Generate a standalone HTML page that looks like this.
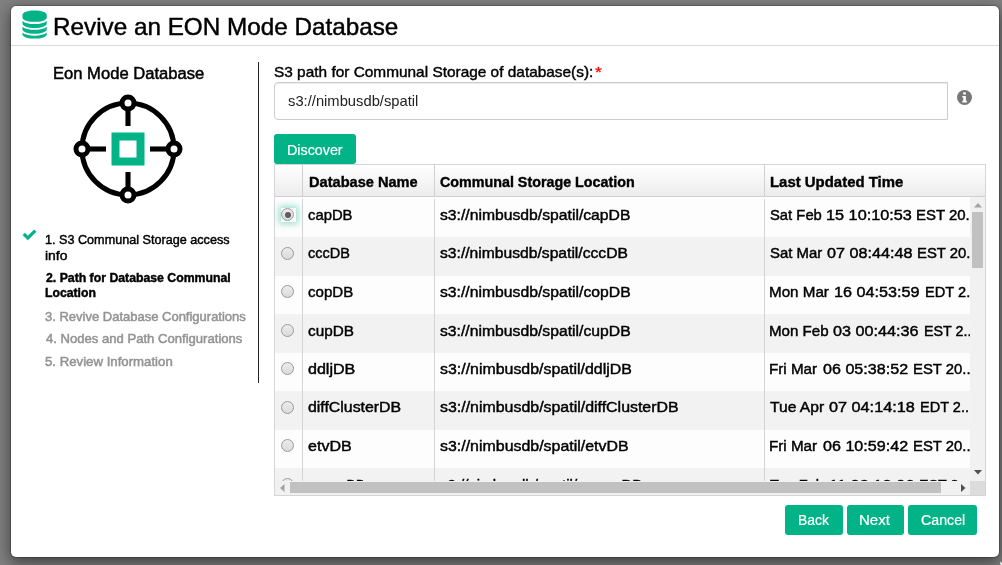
<!DOCTYPE html>
<html><head><meta charset="utf-8"><title>Revive an EON Mode Database</title>
<style>
html,body{margin:0;padding:0;}
body{width:1002px;height:565px;overflow:hidden;background:#808080;font-family:"Liberation Sans", sans-serif;position:relative;}
#bg{position:absolute;left:0;top:0;width:1002px;height:565px;background:#808080;}
#m{position:absolute;left:10px;top:5px;width:988px;height:551px;background:#fff;background-clip:padding-box;border:1px solid rgba(0,0,0,.2);border-radius:6px;box-shadow:0 5px 15px rgba(0,0,0,.5);}
#wrap{position:absolute;left:0;top:0;width:1002px;height:565px;will-change:transform;}
.mn{font-weight:inherit;}
.dots{font-style:normal;}
.t{-webkit-text-stroke:0.45px currentColor;position:absolute;white-space:nowrap;transform-origin:0 0;display:block;}
#hdr{position:absolute;left:11px;top:45px;width:988px;height:1px;background:#d9d9d9;}
#vline{position:absolute;left:258px;top:62px;width:1px;height:320.5px;background:#222;}
#inp{position:absolute;left:274px;top:82px;width:673.5px;height:38px;box-sizing:border-box;border:1px solid #ccc;border-radius:4px 0 0 4px;background:#fff;box-shadow:inset 0 1px 1px rgba(0,0,0,.075);}
.btn{position:absolute;background:#03B388;border-radius:3px;}
#tbl{position:absolute;left:274px;top:164px;width:712px;height:331.5px;box-sizing:border-box;border:1px solid #d5d5d5;background:#fff;}
#th{position:absolute;left:275px;top:165px;width:710px;height:31px;background:linear-gradient(#fff,#ececec);border-bottom:1px solid #d0d0d0;}
.hs{position:absolute;top:165px;width:1px;height:31px;background:#d0d0d0;}
#body{position:absolute;left:0;top:0;width:970px;height:480.5px;overflow:hidden;}
#bodyclip{position:absolute;left:275px;top:197px;width:695.5px;height:284.5px;overflow:hidden;}
.row{position:absolute;left:275px;width:696px;height:38.5px;}
.vs{position:absolute;top:199px;width:1px;height:283px;background:#d4d4d4;}
.radio{position:absolute;left:281px;width:13px;height:13px;box-sizing:border-box;border-radius:50%;border:1px solid #9a9a9a;background:linear-gradient(#ececec,#dadada);}
.radio i{position:absolute;left:2.5px;top:2.5px;width:6px;height:6px;border-radius:50%;background:#5c5c5c;}
.focus{position:absolute;left:281px;width:15px;height:14px;background:#fff;box-shadow:0 0 6px 2px rgba(3,179,136,.4);}
#vsb{position:absolute;left:970px;top:197px;width:15px;height:283.5px;background:#f1f1f1;}
#vth{position:absolute;left:972.2px;top:212px;width:10.6px;height:55.7px;background:#c1c1c1;}
#hsb{position:absolute;left:275px;top:480.5px;width:695px;height:14.5px;background:#f1f1f1;}
#hth{position:absolute;left:290px;top:482.2px;width:651px;height:10.6px;background:#c1c1c1;}
#corner{position:absolute;left:970px;top:480.5px;width:15px;height:14.5px;background:#dcdcdc;}
svg{position:absolute;overflow:visible;}
</style></head>
<body>
<div id="bg"></div>
<div id="m"></div>
<div id="wrap">
<div id="hdr"></div>
<!-- database icon -->
<svg style="left:21.8px;top:10.4px" width="25.2" height="29.2" viewBox="0 0 27 30" preserveAspectRatio="none">
 <g fill="#03B388">
  <path d="M0.5 5.2 C0.5 2.4 6 0.6 13.5 0.6 S26.5 2.4 26.5 5.2 V7.6 C26.5 10.4 21 12.2 13.5 12.2 S0.5 10.4 0.5 7.6 Z"/>
  <path d="M0.5 11.2 C3 13.4 8 14.4 13.5 14.4 S24 13.4 26.5 11.2 V13.8 C26.5 16.6 21 18.4 13.5 18.4 S0.5 16.6 0.5 13.8 Z"/>
  <path d="M0.5 17.2 C3 19.4 8 20.4 13.5 20.4 S24 19.4 26.5 17.2 V19.8 C26.5 22.6 21 24.4 13.5 24.4 S0.5 22.6 0.5 19.8 Z"/>
  <path d="M0.5 23.2 C3 25.4 8 26.4 13.5 26.4 S24 25.4 26.5 23.2 V24.8 C26.5 27.6 21 29.4 13.5 29.4 S0.5 27.6 0.5 24.8 Z"/>
 </g>
</svg>
<!-- eon icon -->
<svg style="left:68px;top:89px" width="120" height="120" viewBox="-60 -60 120 120">
 <g fill="none" stroke="#000" stroke-width="5.1">
  <circle cx="0" cy="0" r="46"/>
  <line x1="0" y1="-40" x2="0" y2="-23"/><line x1="0" y1="40" x2="0" y2="23"/>
  <line x1="-40" y1="0" x2="-22" y2="0"/><line x1="40" y1="0" x2="22" y2="0"/>
 </g>
 <g fill="#fff" stroke="#000" stroke-width="5">
  <circle cx="0" cy="-46" r="6"/><circle cx="0" cy="46" r="6"/><circle cx="-46" cy="0" r="6"/><circle cx="46" cy="0" r="6"/>
 </g>
 <rect x="-12.5" y="-12.5" width="25" height="25" fill="#fff" stroke="#03B388" stroke-width="8"/>
</svg>
<!-- check -->
<svg style="left:0;top:0" width="60" height="260" viewBox="0 0 60 260"><path d="M22.8 235.1 L24.8 232.9 L27.75 235.9 L34.2 229.8 L36.15 231.75 L27.75 240.1 Z" fill="#03B388" stroke="#03B388" stroke-width="0.5" stroke-linejoin="round"/></svg>
<div id="vline"></div>
<div id="inp"></div>
<!-- info icon -->
<svg style="left:957.1px;top:89.9px" width="15" height="15" viewBox="0 0 15 15"><circle cx="7.5" cy="7.5" r="7.5" fill="#777"/><rect x="6.2" y="2.3" width="2.7" height="2.2" fill="#fff"/><path d="M5.3 5.9 H8.9 V10.7 H9.9 V12.4 H5.3 V10.7 H6.3 V7.5 H5.3 Z" fill="#fff"/></svg>
<div class="btn" style="left:274.3px;top:134px;width:81.7px;height:29.7px"></div>
<div id="tbl"></div>
<div id="th"></div>
<div class="hs" style="left:302px"></div><div class="hs" style="left:434px"></div><div class="hs" style="left:764px"></div>
<div id="body">
<div class="row" style="top:198.6px;background:#fdfdfd"></div>
<div class="row" style="top:237.1px;background:#f2f2f2"></div>
<div class="row" style="top:275.6px;background:#fdfdfd"></div>
<div class="row" style="top:314.1px;background:#f2f2f2"></div>
<div class="row" style="top:352.6px;background:#fdfdfd"></div>
<div class="row" style="top:391.1px;background:#f2f2f2"></div>
<div class="row" style="top:429.6px;background:#fdfdfd"></div>
<div class="row" style="top:468.1px;background:#f2f2f2"></div>

<div class="vs" style="left:302px"></div><div class="vs" style="left:434px"></div><div class="vs" style="left:764px"></div>
<div class="focus" style="top:207.6px"></div><div class="radio" style="top:208.1px"><i></i></div>
<div class="radio" style="top:246.6px"></div>
<div class="radio" style="top:285.1px"></div>
<div class="radio" style="top:323.6px"></div>
<div class="radio" style="top:362.1px"></div>
<div class="radio" style="top:400.6px"></div>
<div class="radio" style="top:439.1px"></div>
<div class="radio" style="top:477.6px"></div>

<span class="t" id="t19" style="left:307.5px;top:205.70px;font-size:15.3px;line-height:18px;font-weight:400;color:#000;transform:scaleX(0.9687);">capDB</span>
<span class="t" id="t20" style="left:439.6px;top:205.70px;font-size:15.3px;line-height:18px;font-weight:400;color:#000;transform:scaleX(1.0274);">s3://nimbusdb/spatil/capDB</span>
<span class="t" id="t21" style="left:770.0px;top:205.70px;font-size:15.3px;line-height:18px;font-weight:400;color:#000;transform:scaleX(0.9678);">Sat Feb</span>
<span class="t" id="t22" style="left:825.5px;top:205.70px;font-size:15.3px;line-height:18px;font-weight:400;color:#000;transform:scaleX(1.0630);">15 10:10:53</span>
<span class="t" id="t23" style="left:915.7px;top:205.70px;font-size:15.3px;line-height:18px;font-weight:400;color:#000;transform:scaleX(0.9778);"><b class="mn">EST 20</b><i class="dots">...</i></span>
<span class="t" id="t24" style="left:307.8px;top:244.20px;font-size:15.3px;line-height:18px;font-weight:400;color:#000;transform:scaleX(0.9470);">cccDB</span>
<span class="t" id="t25" style="left:440.3px;top:244.20px;font-size:15.3px;line-height:18px;font-weight:400;color:#000;transform:scaleX(1.0233);">s3://nimbusdb/spatil/cccDB</span>
<span class="t" id="t26" style="left:770.0px;top:244.20px;font-size:15.3px;line-height:18px;font-weight:400;color:#000;transform:scaleX(0.9745);">Sat Mar</span>
<span class="t" id="t27" style="left:826.9px;top:244.20px;font-size:15.3px;line-height:18px;font-weight:400;color:#000;transform:scaleX(1.0564);">07 08:44:48</span>
<span class="t" id="t28" style="left:916.5px;top:244.20px;font-size:15.3px;line-height:18px;font-weight:400;color:#000;transform:scaleX(0.9717);"><b class="mn">EST 20</b><i class="dots">...</i></span>
<span class="t" id="t29" style="left:307.6px;top:282.70px;font-size:15.3px;line-height:18px;font-weight:400;color:#000;transform:scaleX(0.9860);">copDB</span>
<span class="t" id="t30" style="left:439.7px;top:282.70px;font-size:15.3px;line-height:18px;font-weight:400;color:#000;transform:scaleX(1.0285);">s3://nimbusdb/spatil/copDB</span>
<span class="t" id="t31" style="left:769.2px;top:282.70px;font-size:15.3px;line-height:18px;font-weight:400;color:#000;transform:scaleX(0.9924);">Mon Mar</span>
<span class="t" id="t32" style="left:834.3px;top:282.70px;font-size:15.3px;line-height:18px;font-weight:400;color:#000;transform:scaleX(1.0565);">16 04:53:59</span>
<span class="t" id="t33" style="left:924.6px;top:282.70px;font-size:15.3px;line-height:18px;font-weight:400;color:#000;transform:scaleX(0.9554);"><b class="mn">EDT 2</b><i class="dots">...</i></span>
<span class="t" id="t34" style="left:307.7px;top:321.70px;font-size:15.3px;line-height:18px;font-weight:400;color:#000;transform:scaleX(1.0011);">cupDB</span>
<span class="t" id="t35" style="left:439.7px;top:321.70px;font-size:15.3px;line-height:18px;font-weight:400;color:#000;transform:scaleX(1.0285);">s3://nimbusdb/spatil/cupDB</span>
<span class="t" id="t36" style="left:769.4px;top:321.70px;font-size:15.3px;line-height:18px;font-weight:400;color:#000;transform:scaleX(0.9881);">Mon Feb</span>
<span class="t" id="t37" style="left:833.3px;top:321.70px;font-size:15.3px;line-height:18px;font-weight:400;color:#000;transform:scaleX(1.0592);">03 00:44:36</span>
<span class="t" id="t38" style="left:924.0px;top:321.70px;font-size:15.3px;line-height:18px;font-weight:400;color:#000;transform:scaleX(0.9359);"><b class="mn">EST 2</b><i class="dots">...</i></span>
<span class="t" id="t39" style="left:307.5px;top:359.70px;font-size:15.3px;line-height:18px;font-weight:400;color:#000;transform:scaleX(1.0501);">ddljDB</span>
<span class="t" id="t40" style="left:439.8px;top:359.70px;font-size:15.3px;line-height:18px;font-weight:400;color:#000;transform:scaleX(1.0400);">s3://nimbusdb/spatil/ddljDB</span>
<span class="t" id="t41" style="left:768.9px;top:359.70px;font-size:15.3px;line-height:18px;font-weight:400;color:#000;transform:scaleX(0.9941);">Fri Mar</span>
<span class="t" id="t42" style="left:823.0px;top:359.70px;font-size:15.3px;line-height:18px;font-weight:400;color:#000;transform:scaleX(1.0529);">06 05:38:52</span>
<span class="t" id="t43" style="left:913.0px;top:359.70px;font-size:15.3px;line-height:18px;font-weight:400;color:#000;transform:scaleX(0.9723);"><b class="mn">EST 20</b><i class="dots">...</i></span>
<span class="t" id="t44" style="left:307.7px;top:398.20px;font-size:15.3px;line-height:18px;font-weight:400;color:#000;transform:scaleX(1.0370);">diffClusterDB</span>
<span class="t" id="t45" style="left:439.8px;top:398.20px;font-size:15.3px;line-height:18px;font-weight:400;color:#000;transform:scaleX(1.0409);">s3://nimbusdb/spatil/diffClusterDB</span>
<span class="t" id="t46" style="left:770.4px;top:398.20px;font-size:15.3px;line-height:18px;font-weight:400;color:#000;transform:scaleX(1.0210);">Tue Apr</span>
<span class="t" id="t47" style="left:829.1px;top:398.20px;font-size:15.3px;line-height:18px;font-weight:400;color:#000;transform:scaleX(1.0612);">07 04:14:18</span>
<span class="t" id="t48" style="left:919.5px;top:398.20px;font-size:15.3px;line-height:18px;font-weight:400;color:#000;transform:scaleX(0.9499);"><b class="mn">EDT 2</b><i class="dots">...</i></span>
<span class="t" id="t49" style="left:307.5px;top:436.70px;font-size:15.3px;line-height:18px;font-weight:400;color:#000;transform:scaleX(1.0507);">etvDB</span>
<span class="t" id="t50" style="left:439.8px;top:436.70px;font-size:15.3px;line-height:18px;font-weight:400;color:#000;transform:scaleX(1.0414);">s3://nimbusdb/spatil/etvDB</span>
<span class="t" id="t51" style="left:768.9px;top:436.70px;font-size:15.3px;line-height:18px;font-weight:400;color:#000;transform:scaleX(0.9941);">Fri Mar</span>
<span class="t" id="t52" style="left:823.0px;top:436.70px;font-size:15.3px;line-height:18px;font-weight:400;color:#000;transform:scaleX(1.0529);">06 10:59:42</span>
<span class="t" id="t53" style="left:913.0px;top:436.70px;font-size:15.3px;line-height:18px;font-weight:400;color:#000;transform:scaleX(0.9723);"><b class="mn">EST 20</b><i class="dots">...</i></span>
<span class="t" id="t54" style="left:307.7px;top:475.70px;font-size:15.3px;line-height:18px;font-weight:400;color:#000;transform:scaleX(0.8560);">evmaxDB</span>
<span class="t" id="t55" style="left:440.4px;top:475.70px;font-size:15.3px;line-height:18px;font-weight:400;color:#000;transform:scaleX(0.9833);">s3://nimbusdb/spatil/evmaxDB</span>
<span class="t" id="t56" style="left:770.4px;top:475.70px;font-size:15.3px;line-height:18px;font-weight:400;color:#000;transform:scaleX(0.9569);">Tue Feb</span>
<span class="t" id="t57" style="left:828.5px;top:475.70px;font-size:15.3px;line-height:18px;font-weight:400;color:#000;transform:scaleX(1.0720);">11 08:13:06</span>
<span class="t" id="t58" style="left:919.1px;top:475.70px;font-size:15.3px;line-height:18px;font-weight:400;color:#000;transform:scaleX(0.9357);"><b class="mn">EST 2</b><i class="dots">...</i></span>
</div>
<div id="vsb"></div><div id="vth"></div>
<svg style="left:973.6px;top:202.6px" width="8" height="4.5" viewBox="0 0 8 4.5"><path d="M4 0 L8 4.5 H0 Z" fill="#a3a3a3"/></svg>
<svg style="left:973.6px;top:470px" width="8" height="4.5" viewBox="0 0 8 4.5"><path d="M0 0 H8 L4 4.5 Z" fill="#505050"/></svg>
<div id="hsb"></div><div id="hth"></div><div id="corner"></div>
<svg style="left:279.9px;top:483.5px" width="4.5" height="8" viewBox="0 0 4.5 8"><path d="M0 4 L4.5 0 V8 Z" fill="#a3a3a3"/></svg>
<svg style="left:961px;top:483.5px" width="4.5" height="8" viewBox="0 0 4.5 8"><path d="M4.5 4 L0 0 V8 Z" fill="#505050"/></svg>
<div class="btn" style="left:785px;top:505px;width:58px;height:30px"></div>
<div class="btn" style="left:847px;top:505px;width:56.7px;height:30px"></div>
<div class="btn" style="left:908px;top:505px;width:69px;height:30px"></div>
<span class="t" id="t0" style="left:52.8px;top:12.82px;font-size:23.6px;line-height:28px;font-weight:400;color:#000;transform:scaleX(1.0286);-webkit-text-stroke:0.45px #000">Revive an EON Mode Database</span>
<span class="t" id="t1" style="left:52.7px;top:63.71px;font-size:16.7px;line-height:20px;font-weight:400;color:#000;transform:scaleX(0.9940);-webkit-text-stroke:0.5px #000">Eon Mode Database</span>
<span class="t" id="t2" style="left:44.8px;top:231.50px;font-size:13px;line-height:16px;font-weight:400;color:#000;transform:scaleX(0.9711);">1. S3 Communal Storage access</span>
<span class="t" id="t3" style="left:45.4px;top:247.70px;font-size:13px;line-height:16px;font-weight:400;color:#000;transform:scaleX(1.0669);">info</span>
<span class="t" id="t4" style="left:46.2px;top:269.50px;font-size:13px;line-height:16px;font-weight:700;-webkit-text-stroke:0.25px;color:#000;transform:scaleX(0.9435);-webkit-text-stroke:0.45px #000">2. Path for Database Communal</span>
<span class="t" id="t5" style="left:45.3px;top:284.90px;font-size:13px;line-height:16px;font-weight:700;-webkit-text-stroke:0.25px;color:#000;transform:scaleX(0.9391);-webkit-text-stroke:0.45px #000">Location</span>
<span class="t" id="t6" style="left:45.0px;top:308.90px;font-size:13px;line-height:16px;font-weight:400;color:#939393;transform:scaleX(0.9996);-webkit-text-stroke:0.5px #939393">3. Revive Database Configurations</span>
<span class="t" id="t7" style="left:46.4px;top:330.50px;font-size:13px;line-height:16px;font-weight:400;color:#939393;transform:scaleX(1.0065);-webkit-text-stroke:0.5px #939393">4. Nodes and Path Configurations</span>
<span class="t" id="t8" style="left:45.0px;top:353.60px;font-size:13px;line-height:16px;font-weight:400;color:#939393;transform:scaleX(1.0159);-webkit-text-stroke:0.5px #939393">5. Review Information</span>
<span class="t" id="t9" style="left:273.5px;top:63.98px;font-size:14.5px;line-height:17px;font-weight:400;color:#000;transform:scaleX(1.0623);-webkit-text-stroke:0.4px #000">S3 path for Communal Storage of database(s):</span>
<span class="t" id="t10" style="left:595.4px;top:62.80px;font-size:15px;line-height:18px;font-weight:400;color:#f00;transform:scaleX(1.1740);-webkit-text-stroke:0.3px #f00">*</span>
<span class="t" id="t11" style="left:287.7px;top:92.68px;font-size:14.5px;line-height:17px;font-weight:400;color:#222;transform:scaleX(1.0174);-webkit-text-stroke:0">s3://nimbusdb/spatil</span>
<span class="t" id="t12" style="left:286.6px;top:140.13px;font-size:15.5px;line-height:19px;font-weight:400;color:#fff;transform:scaleX(0.9226);-webkit-text-stroke:0.2px #fff">Discover</span>
<span class="t" id="t13" style="left:308.5px;top:172.80px;font-size:15px;line-height:18px;font-weight:700;-webkit-text-stroke:0.25px;color:#000;transform:scaleX(0.9730);-webkit-text-stroke:0.4px #000">Database Name</span>
<span class="t" id="t14" style="left:440.4px;top:172.80px;font-size:15px;line-height:18px;font-weight:700;-webkit-text-stroke:0.25px;color:#000;transform:scaleX(0.9534);-webkit-text-stroke:0.4px #000">Communal Storage Location</span>
<span class="t" id="t15" style="left:770.2px;top:172.80px;font-size:15px;line-height:18px;font-weight:700;-webkit-text-stroke:0.25px;color:#000;transform:scaleX(0.9952);-webkit-text-stroke:0.4px #000">Last Updated Time</span>
<span class="t" id="t16" style="left:798.2px;top:510.13px;font-size:15.5px;line-height:19px;font-weight:400;color:#fff;transform:scaleX(0.8972);-webkit-text-stroke:0.2px #fff">Back</span>
<span class="t" id="t17" style="left:859.1px;top:510.13px;font-size:15.5px;line-height:19px;font-weight:400;color:#fff;transform:scaleX(0.9710);-webkit-text-stroke:0.2px #fff">Next</span>
<span class="t" id="t18" style="left:920.6px;top:510.13px;font-size:15.5px;line-height:19px;font-weight:400;color:#fff;transform:scaleX(0.9157);-webkit-text-stroke:0.2px #fff">Cancel</span>
<svg style="left:996px;top:559px" width="6" height="6" viewBox="996 559 6 6"><path d="M1000 561.6 L1002 563 V565 H1000.6 Z" fill="#f4f4f4"/></svg>
</div>
</body></html>
